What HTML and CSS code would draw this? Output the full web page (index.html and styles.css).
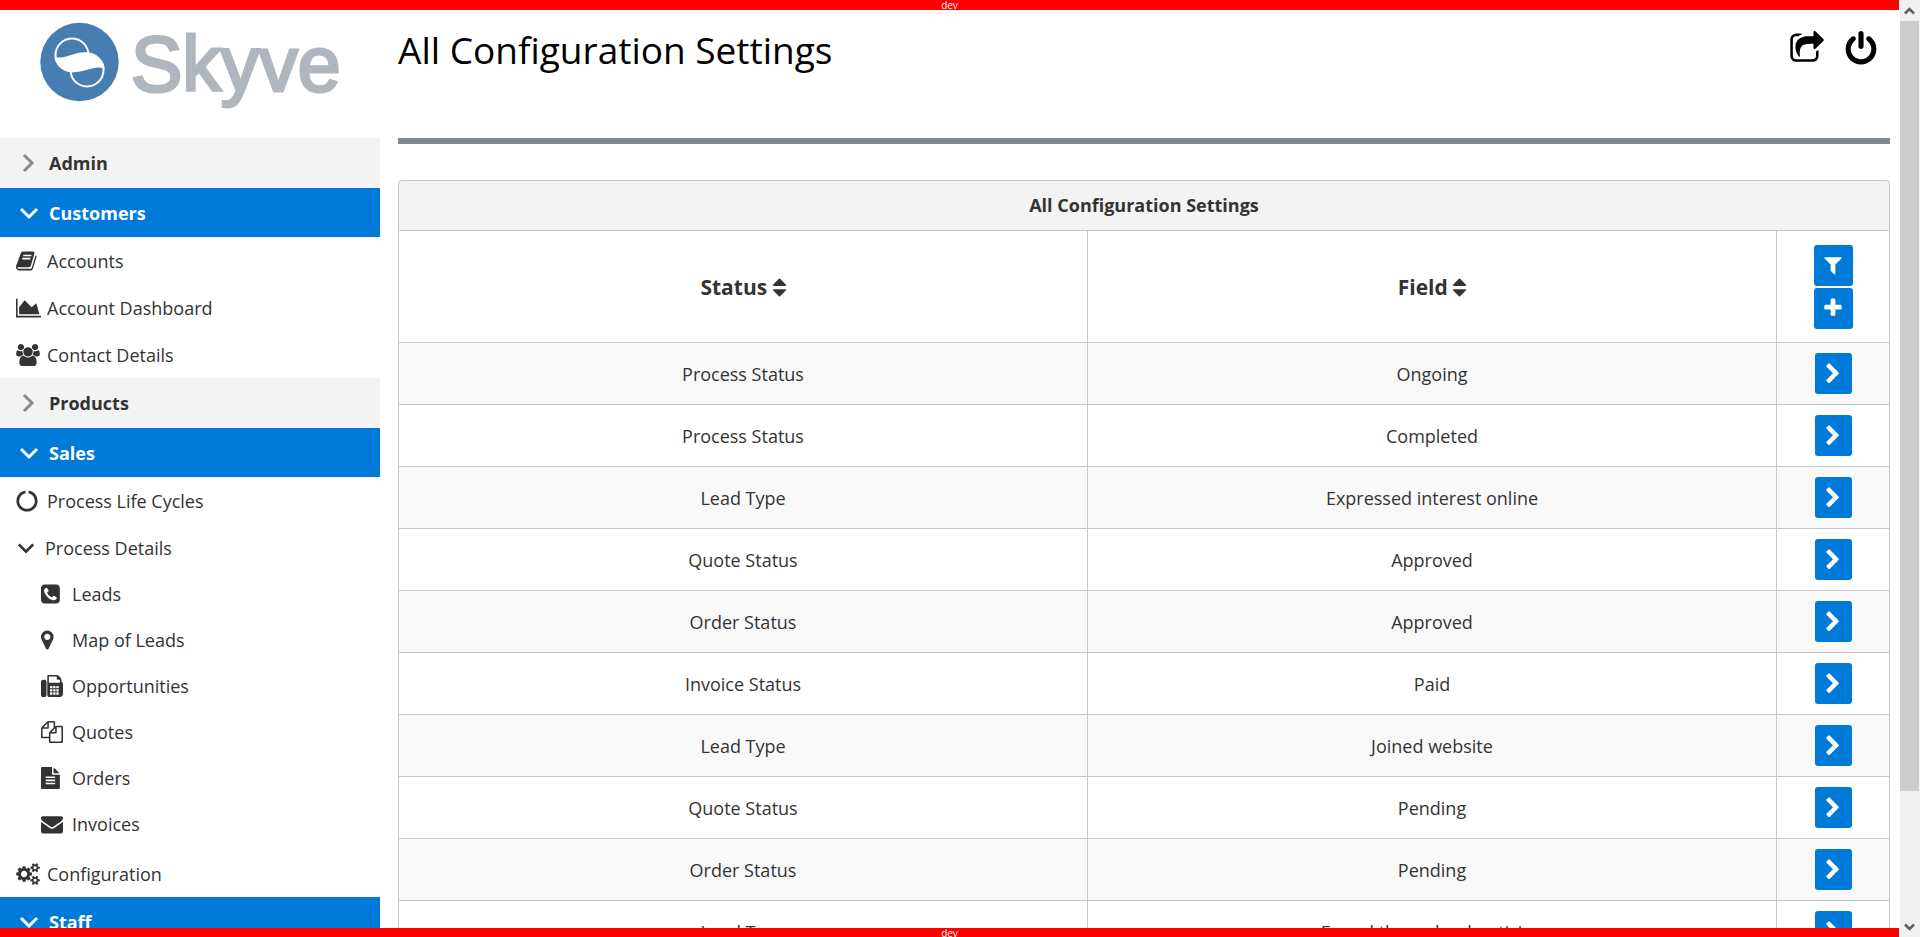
FILE: index.html
```html
<!DOCTYPE html>
<html lang="en">
<head>
<meta charset="utf-8">
<title>All Configuration Settings</title>
<link rel="stylesheet" href="styles.css">
</head>
<body>
<svg class="sprite" aria-hidden="true">
  <symbol id="i-share" viewBox="0 0 1792 1792"><path d="M1472 989v259q0 119-84.5 203.5t-203.5 84.5h-832q-119 0-203.5-84.5t-84.5-203.5v-832q0-119 84.5-203.5t203.5-84.5h255q13 0 22.5 9.500t9.500 22.500q0 27-26 32-77 26-133 60-10 4-16 4h-112q-66 0-113 47t-47 113v832q0 66 47 113t113 47h832q66 0 113-47t47-113v-214q0-19 18-29 28-13 54-37 16-16 35-8 21 9 21 29zm237-496l-384 384q-18 19-45 19-12 0-25-5-39-17-39-59v-192h-160q-323 0-438 131-119 137-74 473 3 23-20 34-8 2-12 2-16 0-26-13-10-14-21-31t-39.500-68.500-49.500-99.500-38.500-114-17.500-122q0-49 3.500-91t14-90 28-88 47-81.500 68.500-74 94.500-61.500 124.500-48.500 159.500-30.500 196.500-11h160v-192q0-42 39-59 13-5 25-5 26 0 45 19l384 384q19 19 19 45t-19 45z"/></symbol>
  <symbol id="i-power" viewBox="0 0 1792 1792"><path d="M1664 896q0 156-61 298t-164 245-245 164-298 61-298-61-245-164-164-245-61-298q0-182 80.500-343t226.500-270q43-32 95.500-25t83.500 50q32 42 24.500 94.500t-49.500 84.500q-98 74-151.500 181t-53.500 228q0 104 40.500 198.500t109.500 163.500 163.500 109.500 198.500 40.500 198.500-40.500 163.500-109.500 109.500-163.500 40.500-198.500q0-121-53.500-228t-151.500-181q-42-32-49.500-84.500t24.500-94.500q31-43 84-50t95 25q146 109 226.500 270t80.500 343zm-640-768v640q0 52-38 90t-90 38-90-38-38-90v-640q0-52 38-90t90-38 90 38 38 90z"/></symbol>
  <symbol id="i-chevron" viewBox="0 0 1792 1792"><path d="M1363 877l-742 742q-19 19-45 19t-45-19l-166-166q-19-19-19-45t19-45l531-531-531-531q-19-19-19-45t19-45l166-166q19-19 45-19t45 19l742 742q19 19 19 45t-19 45z"/></symbol>
  <symbol id="i-filter" viewBox="0 0 1792 1792"><path d="M1595 295q17 41-14 70l-493 493v742q0 42-39 59-13 5-25 5-27 0-45-19l-256-256q-19-19-19-45v-486l-493-493q-31-29-14-70 17-39 59-39h1280q42 0 59 39z"/></symbol>
  <symbol id="i-plus" viewBox="0 0 1792 1792"><path d="M1600 736v192q0 40-28 68t-68 28h-416v416q0 40-28 68t-68 28h-192q-40 0-68-28t-28-68v-416h-416q-40 0-68-28t-28-68v-192q0-40 28-68t68-28h416v-416q0-40 28-68t68-28h192q40 0 68 28t28 68v416h416q40 0 68 28t28 68z"/></symbol>
  <symbol id="i-sort" viewBox="384 0 1024 1792"><path d="M1408 1088q0 26-19 45l-448 448q-19 19-45 19t-45-19l-448-448q-19-19-19-45t19-45 45-19h896q26 0 45 19t19 45zm0-384q0 26-19 45t-45 19h-896q-26 0-45-19t-19-45 19-45l448-448q19-19 45-19t45 19l448 448q19 19 19 45z"/></symbol>
  <symbol id="i-right" viewBox="0 0 20 20"><path d="M5 2l8 8-8 8" fill="none" stroke="currentColor" stroke-width="3"/></symbol>
  <symbol id="i-down" viewBox="0 0 20 20"><path d="M2 6l8 8 8-8" fill="none" stroke="currentColor" stroke-width="3"/></symbol>
  <symbol id="i-book" viewBox="64 0 1792 1792"><path d="M1703 478q40 57 18 129l-275 906q-19 64-76.500 107.500t-122.500 43.500h-923q-77 0-148.500-53.500t-99.500-131.500q-24-67-2-127 0-4 3-27t4-37q1-8-3-21.500t-3-19.500q2-11 8-21t16.500-23.500 16.500-23.500q23-38 45-91.500t30-91.500q3-10 .5-30t-.5-28q3-11 17-28t17-23q21-36 42-92t25-90q1-9-2.500-32t.5-28q4-13 22-30.500t22-22.500q19-26 42.500-84.500t27.500-96.500q1-8-3-25.500t-2-26.500q2-8 9-18t18-23 17-21q8-12 16.500-30.500t15-35 16-36 19.500-32 26.500-23.500 36-11.500 47.500 5.500l-1 3q38-9 51-9h761q74 0 114 56t18 130l-274 906q-36 119-71.500 153.500t-128.500 34.500h-869q-27 0-38 15-11 16-1 43 24 70 144 70h923q29 0 56-15.500t35-41.500l300-987q7-22 5-57 38 15 59 43zm-1064 2q-4 13 2 22.500t20 9.500h608q13 0 25.500-9.500t16.500-22.500l21-64q4-13-2-22.500t-20-9.500h-608q-13 0-25.500 9.500t-16.500 22.500zm-83 256q-4 13 2 22.500t20 9.500h608q13 0 25.500-9.500t16.500-22.500l21-64q4-13-2-22.500t-20-9.500h-608q-13 0-25.500 9.500t-16.500 22.500z"/></symbol>
  <symbol id="i-chart" viewBox="0 0 2048 1792"><path d="M2048 1536v128h-2048v-1536h128v1408h1920zm-384-1024l256 896h-1664v-576l448-576 576 576z"/></symbol>
  <symbol id="i-users" viewBox="0 0 1920 1792"><path d="M593 896q-162 5-265 128h-134q-82 0-138-40.500t-56-118.500q0-353 124-353 6 0 43.500 21t97.500 42.500 119 21.500q67 0 133-23-5 37-5 66 0 139 81 256zm1071 637q0 120-73 189.500t-194 69.500h-874q-121 0-194-69.500t-73-189.500q0-53 3.500-103.500t14-109 26.500-108.500 43-97.500 62-81 85.500-53.500 111.500-20q10 0 43 21.500t73 48 107 48 135 21.500 135-21.500 107-48 73-48 43-21.500q61 0 111.500 20t85.500 53.500 62 81 43 97.500 26.500 108.500 14 109 3.500 103.500zm-1024-1277q0 106-75 181t-181 75-181-75-75-181 75-181 181-75 181 75 75 181zm704 384q0 159-112.500 271.500t-271.500 112.500-271.500-112.500-112.500-271.500 112.500-271.500 271.500-112.500 271.500 112.500 112.500 271.500zm576 225q0 78-56 118.500t-138 40.500h-134q-103-123-265-128 81-117 81-256 0-29-5-66 66 23 133 23 59 0 119-21.500t97.500-42.500 43.500-21q124 0 124 353zm-128-609q0 106-75 181t-181 75-181-75-75-181 75-181 181-75 181 75 75 181z"/></symbol>
  <symbol id="i-notch" viewBox="0 0 1792 1792"><path d="M1760 896q0 176-68.500 336t-184 275.500-275.500 184-336 68.500-336-68.500-275.500-184-184-275.500-68.500-336q0-213 97-398.500t265-305.500 374-151v228q-221 45-366.500 221t-145.500 406q0 130 51 248.500t136.500 204 204 136.500 248.500 51 248.500-51 204-136.500 136.500-204 51-248.500q0-230-145.500-406t-366.500-221v-228q206 31 374 151t265 305.500 97 398.500z"/></symbol>
  <symbol id="i-phone" viewBox="128 0 1792 1792"><path d="M1408 1193q0-11-2-16t-18-16.500-40.500-25-47.500-26.500-45.500-25-28.500-15q-5-3-19-13t-25-15-21-5q-15 0-36.500 20.500t-39.500 45-38.500 45-33.500 20.500q-7 0-16.500-3.500t-15.500-6.500-17-9.500-14-8.500q-99-55-170-126.500t-127-170.500q-2-3-8.500-14t-9.500-17-6.500-15.500-3.500-16.500q0-13 20.500-33.500t45-38.500 45-39.500 20.500-36.500q0-10-5-21t-15-25-13-19q-3-6-15-28.500t-25-45.500-26.500-47.500-25-40.500-16.500-18-16-2q-48 0-101 22-46 21-80 94.500t-34 130.500q0 16 2.500 34t5 30.500 9 33 10 29.500 12.500 33 11 30q60 164 216.500 320.500t320.500 216.500q6 2 30 11t33 12.500 29.500 10 33 9 30.500 5 34 2.500q57 0 130.500-34t94.500-80q22-53 22-101zm256-777v960q0 119-84.500 203.500t-203.500 84.500h-960q-119 0-203.500-84.500t-84.500-203.500v-960q0-119 84.500-203.500t203.500-84.500h960q119 0 203.500 84.500t84.500 203.500z"/></symbol>
  <symbol id="i-marker" viewBox="384 0 1792 1792"><path d="M1152 640q0-106-75-181t-181-75-181 75-75 181 75 181 181 75 181-75 75-181zm256 0q0 109-33 179l-364 774q-16 33-47.500 52t-67.500 19-67.500-19-46.500-52l-365-774q-33-70-33-179 0-212 150-362t362-150 362 150 150 362z"/></symbol>
  <symbol id="i-fax" viewBox="0 0 1792 1792"><path fill-rule="evenodd" d="M288 384q66 0 113 47t47 113v1088q0 66-47 113t-113 47h-128q-66 0-113-47t-47-113v-1088q0-66 47-113t113-47h128zM1664 547q58 34 93 93t35 128v768q0 106-75 181t-181 75h-864q-66 0-113-47t-47-113v-1536q0-40 28-68t68-28h672q40 0 88 20t76 48l152 152q28 28 48 76t20 88v163zM640 128v512h896v-256h-160q-40 0-68-28t-28-68v-160zM768 896h128q32 0 32 32v128q0 32-32 32h-128q-32 0-32-32v-128q0-32 32-32zm256 0h128q32 0 32 32v128q0 32-32 32h-128q-32 0-32-32v-128q0-32 32-32zm256 0h128q32 0 32 32v128q0 32-32 32h-128q-32 0-32-32v-128q0-32 32-32zM768 1152h128q32 0 32 32v128q0 32-32 32h-128q-32 0-32-32v-128q0-32 32-32zm256 0h128q32 0 32 32v128q0 32-32 32h-128q-32 0-32-32v-128q0-32 32-32zm256 0h128q32 0 32 32v128q0 32-32 32h-128q-32 0-32-32v-128q0-32 32-32zM768 1408h128q32 0 32 32v128q0 32-32 32h-128q-32 0-32-32v-128q0-32 32-32zm256 0h128q32 0 32 32v128q0 32-32 32h-128q-32 0-32-32v-128q0-32 32-32zm256 0h128q32 0 32 32v128q0 32-32 32h-128q-32 0-32-32v-128q0-32 32-32z"/></symbol>
  <symbol id="i-files" viewBox="0 0 1792 1792"><path d="M1696 384q40 0 68 28t28 68v1216q0 40-28 68t-68 28h-960q-40 0-68-28t-28-68v-288h-544q-40 0-68-28t-28-68v-672q0-40 20-88t48-76l408-408q28-28 76-48t88-20h416q40 0 68 28t28 68v328q68-40 128-40h416zm-544 213l-299 299h299v-299zm-640-384l-299 299h299v-299zm196 647l316-316v-416h-384v416q0 40-28 68t-68 28h-416v640h512v-256q0-40 20-88t48-76zm956 804v-1152h-384v416q0 40-28 68t-68 28h-416v640h896z"/></symbol>
  <symbol id="i-file" viewBox="128 0 1792 1792"><path d="M1596 476q14 14 28 36h-472v-472q22 14 36 28zm-476 164h544v1056q0 40-28 68t-68 28h-1344q-40 0-68-28t-28-68v-1600q0-40 28-68t68-28h800v544q0 40 28 68t68 28zm160 736v-64q0-14-9-23t-23-9h-704q-14 0-23 9t-9 23v64q0 14 9 23t23 9h704q14 0 23-9t9-23zm0-256v-64q0-14-9-23t-23-9h-704q-14 0-23 9t-9 23v64q0 14 9 23t23 9h704q14 0 23-9t9-23zm0-256v-64q0-14-9-23t-23-9h-704q-14 0-23 9t-9 23v64q0 14 9 23t23 9h704q14 0 23-9t9-23z"/></symbol>
  <symbol id="i-mail" viewBox="0 0 1792 1792"><path d="M1792 710v794q0 66-47 113t-113 47h-1472q-66 0-113-47t-47-113v-794q44 49 101 87 362 246 497 345 57 42 92.500 65.500t94.500 48 110 24.500h2q51 0 110-24.500t94.500-48 92.500-65.500q170-123 498-345 57-39 100-87zm0-294q0 79-49 151t-122 123q-376 261-468 325-10 7-42.500 31t-54 38.500-52 32.500-57.500 27-50 9h-2q-23 0-50-9t-57.500-27-52-32.500-54-38.500-42.500-31q-91-64-262-182.500t-205-142.500q-62-42-117-115.500t-55-136.500q0-78 41.500-130t118.500-52h1472q65 0 112.500 47t47.500 113z"/></symbol>
  <symbol id="i-cogs" viewBox="0 0 1920 1792"><path d="M896 896q0-106-75-181t-181-75-181 75-75 181 75 181 181 75 181-75 75-181zm768 512q0-52-38-90t-90-38-90 38-38 90q0 53 37.500 90.500t90.500 37.500 90.500-37.500 37.500-90.500zm0-1024q0-52-38-90t-90-38-90 38-38 90q0 53 37.500 90.500t90.500 37.500 90.500-37.500 37.500-90.500zm-384 421v185q0 10-7 19.500t-16 10.500l-155 24q-11 35-32 76 34 48 90 115 7 11 7 20 0 12-7 19-23 30-82.500 89.500t-78.500 59.500q-11 0-21-7l-115-90q-37 19-77 31-11 108-23 155-7 24-30 24h-186q-11 0-20-7.500t-10-17.500l-23-153q-34-10-75-31l-118 89q-7 7-20 7-11 0-21-8-144-133-144-160 0-9 7-19 10-14 41-53t47-61q-23-44-35-82l-152-24q-10-1-17-9.500t-7-19.500v-185q0-10 7-19.500t16-10.500l155-24q11-35 32-76-34-48-90-115-7-11-7-20 0-12 7-20 22-30 82-89t79-59q11 0 21 7l115 90q34-18 77-32 11-108 23-154 7-24 30-24h186q11 0 20 7.500t10 17.500l23 153q34 10 75 31l118-89q8-7 20-7 11 0 21 8 144 133 144 160 0 8-7 19-12 16-42 54t-45 60q23 48 34 82l152 23q10 2 17 10.500t7 19.500zm640 533v140q0 16-149 31-12 27-30 52 51 113 51 138 0 4-4 7-122 71-124 71-8 0-46-47t-52-68q-20 2-30 2t-30-2q-14 21-52 68t-46 47q-2 0-124-71-4-3-4-7 0-25 51-138-18-25-30-52-149-15-149-31v-140q0-16 149-31 13-29 30-52-51-113-51-138 0-4 4-7 4-2 35-20t59-34 30-16q8 0 46 46.500t52 67.500q20-2 30-2t30 2q51-71 92-112l6-2q4 0 124 70 4 3 4 7 0 25-51 138 17 23 30 52 149 15 149 31zm0-1024v140q0 16-149 31-12 27-30 52 51 113 51 138 0 4-4 7-122 71-124 71-8 0-46-47t-52-68q-20 2-30 2t-30-2q-14 21-52 68t-46 47q-2 0-124-71-4-3-4-7 0-25 51-138-18-25-30-52-149-15-149-31v-140q0-16 149-31 13-29 30-52-51-113-51-138 0-4 4-7 4-2 35-20t59-34 30-16q8 0 46 46.500t52 67.500q20-2 30-2t30 2q51-71 92-112l6-2q4 0 124 70 4 3 4 7 0 25-51 138 17 23 30 52 149 15 149 31z"/></symbol>
</svg>

<div class="app">
  <div class="env env-top">dev</div>
  <div class="page">
    <aside class="sidebar">
      <a class="logo" href="#">
        <svg class="logo-mark" viewBox="40 22 80 80" aria-hidden="true">
          <circle cx="79.5" cy="62" r="39.200" fill="#487db1"/>
          <circle cx="72" cy="55" r="16.500" fill="none" stroke="#fff" stroke-width="2"/>
          <circle cx="87" cy="70" r="16.500" fill="none" stroke="#fff" stroke-width="2"/>
          <path d="M54.500 57C66 60 74 51 88 52.500C98 54 105 62 104.500 68.500C93 65 86 73 72 72C62 70 55 64 54.500 57Z" fill="#fff"/>
        </svg>
        <span class="logo-text">Skyve</span>
      </a>
      <nav class="menu">
        <button class="group"><svg class="arrow"><use href="#i-right"/></svg>Admin</button>
        <button class="group open"><svg class="arrow"><use href="#i-down"/></svg>Customers</button>
        <ul class="items">
          <li><a href="#"><span class="ico"><svg><use href="#i-book"/></svg></span>Accounts</a></li>
          <li><a href="#"><span class="ico"><svg class="w25"><use href="#i-chart"/></svg></span>Account Dashboard</a></li>
          <li><a href="#"><span class="ico"><svg class="w24"><use href="#i-users"/></svg></span>Contact Details</a></li>
        </ul>
        <button class="group"><svg class="arrow"><use href="#i-right"/></svg>Products</button>
        <button class="group open"><svg class="arrow"><use href="#i-down"/></svg>Sales</button>
        <ul class="items">
          <li><a href="#"><span class="ico"><svg><use href="#i-notch"/></svg></span>Process Life Cycles</a></li>
          <li><a class="parent" href="#"><svg class="arrow small"><use href="#i-down"/></svg>Process Details</a>
            <ul class="sub">
              <li><a href="#"><span class="ico"><svg><use href="#i-phone"/></svg></span>Leads</a></li>
              <li><a href="#"><span class="ico"><svg><use href="#i-marker"/></svg></span>Map of Leads</a></li>
              <li><a href="#"><span class="ico"><svg><use href="#i-fax"/></svg></span>Opportunities</a></li>
              <li><a href="#"><span class="ico"><svg><use href="#i-files"/></svg></span>Quotes</a></li>
              <li><a href="#"><span class="ico"><svg><use href="#i-file"/></svg></span>Orders</a></li>
              <li><a href="#"><span class="ico"><svg><use href="#i-mail"/></svg></span>Invoices</a></li>
            </ul>
          </li>
          <li><a href="#"><span class="ico"><svg class="w24"><use href="#i-cogs"/></svg></span>Configuration</a></li>
        </ul>
        <button class="group open"><svg class="arrow"><use href="#i-down"/></svg>Staff</button>
      </nav>
    </aside>
    <main class="main">
      <header class="head">
        <h1>All Configuration Settings</h1>
        <div class="actions">
          <button aria-label="Switch view"><svg><use href="#i-share"/></svg></button>
          <button aria-label="Sign out"><svg><use href="#i-power"/></svg></button>
        </div>
      </header>
      <section class="panel">
        <h2>All Configuration Settings</h2>
        <table>
          <thead>
            <tr>
              <th>Status <svg class="sort"><use href="#i-sort"/></svg></th>
              <th>Field <svg class="sort"><use href="#i-sort"/></svg></th>
              <th class="act"><div class="tools">
                <button class="btn wide" aria-label="Filter"><svg><use href="#i-filter"/></svg></button>
                <button class="btn wide" aria-label="Add"><svg><use href="#i-plus"/></svg></button>
              </div></th>
            </tr>
          </thead>
          <tbody>
            <tr><td>Process Status</td><td>Ongoing</td><td><button class="btn" aria-label="Open"><svg><use href="#i-chevron"/></svg></button></td></tr>
            <tr><td>Process Status</td><td>Completed</td><td><button class="btn" aria-label="Open"><svg><use href="#i-chevron"/></svg></button></td></tr>
            <tr><td>Lead Type</td><td>Expressed interest online</td><td><button class="btn" aria-label="Open"><svg><use href="#i-chevron"/></svg></button></td></tr>
            <tr><td>Quote Status</td><td>Approved</td><td><button class="btn" aria-label="Open"><svg><use href="#i-chevron"/></svg></button></td></tr>
            <tr><td>Order Status</td><td>Approved</td><td><button class="btn" aria-label="Open"><svg><use href="#i-chevron"/></svg></button></td></tr>
            <tr><td>Invoice Status</td><td>Paid</td><td><button class="btn" aria-label="Open"><svg><use href="#i-chevron"/></svg></button></td></tr>
            <tr><td>Lead Type</td><td>Joined website</td><td><button class="btn" aria-label="Open"><svg><use href="#i-chevron"/></svg></button></td></tr>
            <tr><td>Quote Status</td><td>Pending</td><td><button class="btn" aria-label="Open"><svg><use href="#i-chevron"/></svg></button></td></tr>
            <tr><td>Order Status</td><td>Pending</td><td><button class="btn" aria-label="Open"><svg><use href="#i-chevron"/></svg></button></td></tr>
            <tr><td>Lead Type</td><td>Found through advertising</td><td><button class="btn" aria-label="Open"><svg><use href="#i-chevron"/></svg></button></td></tr>
          </tbody>
        </table>
      </section>
    </main>
  </div>
  <div class="env env-bottom">dev</div>
</div>
<div class="scrollbar" aria-hidden="true">
  <svg class="sb-arrow" viewBox="0 0 20 21"><path d="M5 13.500l4.500-4.500 4.500 4.500" fill="none" stroke="#606060" stroke-width="2.500"/></svg>
  <div class="sb-track"><div class="sb-thumb"></div></div>
  <svg class="sb-arrow" viewBox="0 0 20 21"><path d="M5 8.500l4.500 4.500 4.500-4.500" fill="none" stroke="#606060" stroke-width="2.500"/></svg>
</div>
</body>
</html>
```
FILE: styles.css
```css
* { box-sizing: border-box; }
body {
  margin: 0;
  height: 100vh;
  overflow: hidden;
  display: grid;
  grid-template-columns: 1fr 20px;
  background: #fff;
  color: #333;
  font: 18px/24px "Open Sans", "Noto Sans", sans-serif;
}
button { font: inherit; color: inherit; border: 0; background: none; padding: 0; cursor: pointer; }
a { color: inherit; text-decoration: none; }
ul { list-style: none; margin: 0; padding: 0; }
svg { fill: currentColor; display: block; flex: none; }
.sprite { position: absolute; width: 0; height: 0; }

.app { display: flex; flex-direction: column; height: 100vh; min-width: 0; }
.env {
  flex: none;
  background: #f00;
  color: #fff;
  font-size: 10px;
  line-height: 10px;
  text-align: center;
  margin-right: 1px;
}
.env-top { height: 10px; }
.env-bottom { height: 9px; }
.page { flex: 1; min-height: 0; display: flex; overflow: hidden; }

.sidebar { width: 380px; flex: none; }
.logo { display: flex; gap: 11px; height: 128px; padding: 12px 0 0 40px; }
.logo-mark { width: 80px; height: 80px; }
.logo-text {
  font: 77px/84px "Liberation Sans", Arial, sans-serif;
  color: #b0b6bd;
  -webkit-text-stroke: 3px #b0b6bd;
}

.group {
  display: flex;
  align-items: center;
  gap: 10px;
  width: 100%;
  height: 49px;
  margin-bottom: 1px;
  padding: 1px 0 0 19px;
  background: #f3f3f3;
  font-weight: 700;
}
.group .arrow { color: #888; }
.group.open { background: #007ad9; color: #fff; margin-bottom: 0; }
.group.open .arrow { color: #fff; }
.arrow { width: 20px; height: 20px; }
.arrow.small { width: 18px; height: 18px; }
.items a { display: flex; align-items: center; height: 47px; padding-left: 16px; }
.items .parent { gap: 10px; padding-left: 17px; }
.ico { width: 31px; flex: none; }
.ico svg { width: 22px; height: 22px; }
.ico .w24 { width: 24px; }
.ico .w25 { width: 25px; }
.items .sub { padding-bottom: 3px; }
.items .sub a { height: 46px; padding-left: 41px; }

.main { flex: 1; min-width: 0; padding: 0 10px 0 18px; }
.head {
  display: flex;
  justify-content: space-between;
  height: 134px;
  padding: 16px 11px 0 0;
  border-bottom: 6px solid #808892;
  color: #000;
}
h1 { margin: 0; font-size: 37px; line-height: 48px; font-weight: 400; }
.actions { display: flex; gap: 18px; height: 46px; align-items: center; }
.actions svg { width: 36px; height: 36px; }

.panel { margin-top: 36px; }
h2 {
  margin: 0;
  height: 50px;
  border: 1px solid #c8c8c8;
  border-bottom: 0;
  border-radius: 4px 4px 0 0;
  background: #f3f3f3;
  font-size: 18px;
  line-height: 49px;
  text-align: center;
}
table { width: 100%; table-layout: fixed; border-collapse: collapse; }
th, td { border: 1px solid #c8c8c8; padding: 0; text-align: center; vertical-align: middle; }
th { height: 112px; font-size: 21px; }
td { height: 62px; }
.act { width: 113px; }
tbody tr:nth-child(odd) { background: #f9f9f9; }
.sort { display: inline-block; width: 13px; height: 23px; vertical-align: -4px; }
.tools { display: flex; flex-direction: column; align-items: center; gap: 2px; }
.btn {
  display: inline-flex;
  align-items: center;
  justify-content: center;
  width: 37px;
  height: 41px;
  border-radius: 3px;
  background: #007ad9;
  color: #fff;
  vertical-align: middle;
}
.btn.wide { width: 39px; }
.btn svg { width: 22px; height: 22px; }

.scrollbar { display: flex; flex-direction: column; height: 100vh; background: #f0f0f0; }
.sb-arrow { width: 20px; height: 21px; }
.sb-track { flex: 1; }
.sb-thumb { height: 86%; margin-right: 1px; background: #cdcdcd; }
```
